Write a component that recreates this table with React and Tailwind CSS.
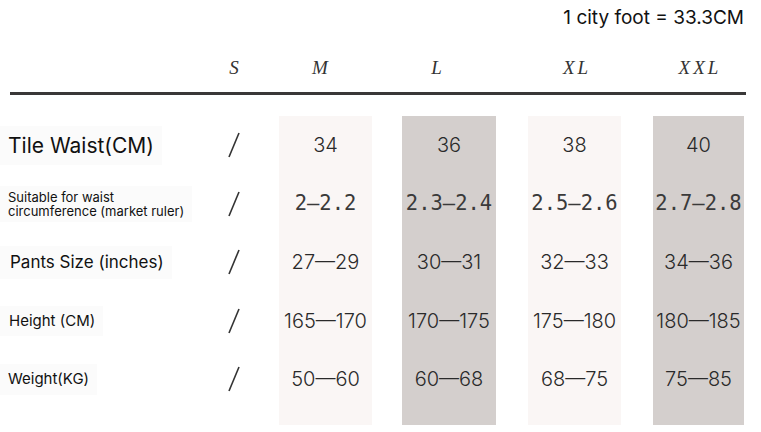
const sizes = [
  { key: "M", bg: "bg-[#faf6f5]", ml: "ml-[23px]", w: "w-[93px]", hd: "pr-[8px]" },
  { key: "L", bg: "bg-[#d4cfcd]", ml: "ml-[30px]", w: "w-[94px]", hd: "pr-[22px]" },
  { key: "XL", bg: "bg-[#faf6f5]", ml: "ml-[32px]", w: "w-[93px]", hd: "pl-[5px]" },
  { key: "XXL", bg: "bg-[#d4cfcd]", ml: "ml-[32px]", w: "w-[91px]", hd: "pl-[3px]" },
];

const rows = [
  { label: "Tile Waist(CM)", cls: "text-[21px] pl-[8px]", mono: false, vals: ["34", "36", "38", "40"] },
  {
    label: "Suitable for waist\ncircumference (market ruler)",
    cls: "text-[13px] leading-[14px] pl-[8px]",
    mono: true,
    vals: ["2—2.2", "2.3—2.4", "2.5—2.6", "2.7—2.8"],
  },
  { label: "Pants Size (inches)", cls: "text-[17px] pl-[10px]", mono: false, vals: ["27—29", "30—31", "32—33", "34—36"] },
  { label: "Height (CM)", cls: "text-[15px] pl-[9px]", mono: false, vals: ["165—170", "170—175", "175—180", "180—185"] },
  { label: "Weight(KG)", cls: "text-[15px] pl-[8px]", mono: false, vals: ["50—60", "60—68", "68—75", "75—85"] },
];

const App = () => {
  return (
    <div className="w-[761px] h-[432px] bg-white overflow-hidden font-['Inter',sans-serif] text-[#222]">
      <div className="h-[36px] flex justify-end items-start pr-[17px]">
        <span className="text-[19px] leading-[36px] text-[#111]">1 city foot = 33.3CM</span>
      </div>

      {/* header */}
      <div className="flex items-center h-[56px] pt-[8px] font-['Liberation_Serif',serif] italic text-[19px] text-[#333]">
        <div className="w-[212px]" />
        <div className="w-[44px] text-center">S</div>
        {sizes.map((s) => (
          <div key={s.key} className={`${s.ml} ${s.w} ${s.hd} text-center tracking-[3px]`}>
            {s.key}
          </div>
        ))}
      </div>
      <div className="ml-[10px] w-[736px] h-[3px] bg-[#3a3838]" />

      {/* body */}
      <div className="flex mt-[21px]">
        <div className="w-[212px] flex flex-col">
          {rows.map((r, i) => (
            <div key={i} className="h-[58.5px] flex items-center">
              <div className={`${r.cls} whitespace-pre-line text-[#111] bg-[#fbfbfb] pr-[8px] py-[4px]`}>{r.label}</div>
            </div>
          ))}
        </div>
        <div className="w-[44px] flex flex-col">
          {rows.map((r, i) => (
            <div key={i} className="h-[58.5px] flex items-center justify-center">
              <svg width="14" height="26" viewBox="0 0 14 26">
                <line x1="12" y1="1" x2="2" y2="25" stroke="#333" strokeWidth="1.6" />
              </svg>
            </div>
          ))}
        </div>
        {sizes.map((s, ci) => (
          <div key={s.key} className={`${s.ml} ${s.w} ${s.bg} flex flex-col pb-[16px]`}>
            {rows.map((r, i) => (
              <div
                key={i}
                className={`h-[58.5px] flex items-center justify-center whitespace-nowrap ${
                  r.mono
                    ? "font-['DejaVu_Sans_Mono',monospace] text-[20.5px] text-[#3a3a3a]"
                    : "text-[20px] font-[350] text-[#2a2a2a]"
                }`}
              >
                {r.vals[ci]}
              </div>
            ))}
          </div>
        ))}
      </div>
    </div>
  );
};

export default App;
